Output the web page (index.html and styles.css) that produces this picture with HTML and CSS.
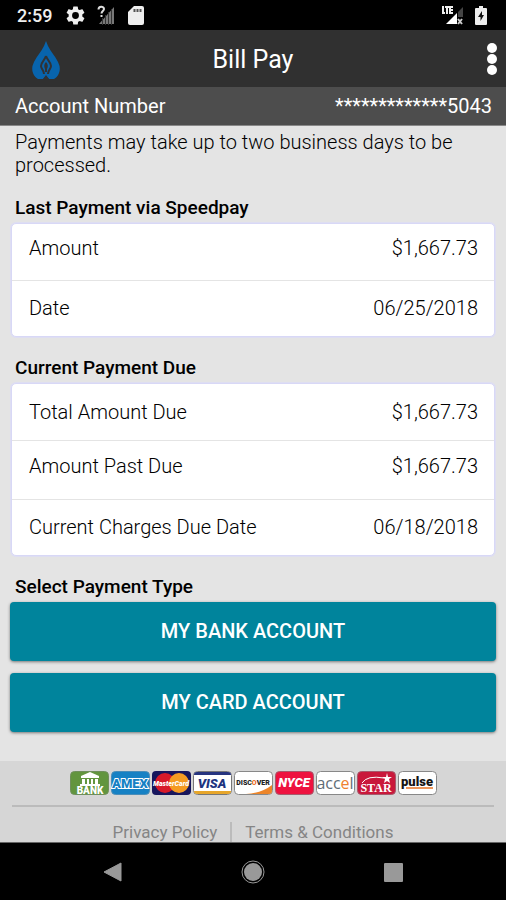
FILE: index.html
```html
<!DOCTYPE html>
<html lang="en">
<head>
<meta charset="utf-8">
<meta name="viewport" content="width=device-width, initial-scale=1">
<title>Bill Pay</title>
<link rel="stylesheet" href="styles.css">
</head>
<body>
<div class="status">
  <span class="clock">2:59</span>
  <svg class="gear" viewBox="2 2 20 20" width="19" height="19" aria-hidden="true"><path fill="#eee" d="M19.14 12.94c.04-.3.06-.61.06-.94s-.02-.64-.07-.94l2.03-1.58a.49.49 0 0 0 .12-.61l-1.92-3.32a.49.49 0 0 0-.59-.22l-2.39.96a7 7 0 0 0-1.62-.94l-.36-2.54a.48.48 0 0 0-.48-.41h-3.84a.47.47 0 0 0-.47.41l-.36 2.54c-.59.24-1.13.57-1.62.94l-2.39-.96a.48.48 0 0 0-.59.22L2.74 8.87a.48.48 0 0 0 .12.61l2.03 1.58a6 6 0 0 0-.02 1.88l-2.03 1.58a.49.49 0 0 0-.12.61l1.92 3.32c.12.22.37.29.59.22l2.39-.96c.5.38 1.03.7 1.62.94l.36 2.54c.05.24.24.41.48.41h3.84c.24 0 .44-.17.47-.41l.36-2.54a7 7 0 0 0 1.62-.94l2.39.96c.22.08.47 0 .59-.22l1.92-3.32a.47.47 0 0 0-.12-.61zM12 15.6a3.6 3.6 0 1 1 0-7.2 3.6 3.6 0 0 1 0 7.2z"/></svg>
  <svg class="unknown" viewBox="0 0 18 20" width="18" height="20" aria-hidden="true"><path fill="#777" d="M17 2v17H2z"/><path stroke="#333" d="M5.500 13v7M8.500 10v10M11.500 7v13M14.500 4v16"/><path fill="none" stroke="#000" stroke-width="5" d="M1.500 4.500C1.500 1 7 1 7 4c0 2-2.500 2-2.500 4.500"/><path fill="none" stroke="#ddd" stroke-width="2" d="M1.500 4.500C1.500 1 7 1 7 4c0 2-2.500 2-2.500 4.500M4.500 10v2"/></svg>
  <svg class="sd" viewBox="0 0 16 19" width="16" height="19" aria-hidden="true"><path fill="#eee" d="M6 0h8q2 0 2 2v15q0 2-2 2H2q-2 0-2-2V6z"/><path stroke="#555" stroke-width="2" d="M6.500 3v3M9.500 3v3M12.500 3v3"/></svg>
  <svg class="lte" viewBox="0 0 24 20" width="24" height="20" aria-hidden="true"><path fill="#444" d="M22 2v10h-5V7z"/><path fill="#fff" d="M16 8v11H5z"/><path fill="none" stroke="#eee" stroke-width="2" d="M2 1v7h2M4 2h4M6 2v7M12 2H9v6h3M9 5h3"/><path stroke="#ccc" stroke-width="2" d="M17 14l4 5M21 14l-4 5"/></svg>
  <svg class="battery" viewBox="0 0 12 19" width="12" height="19" aria-hidden="true"><path fill="#eee" d="M4 0h4v2h3q1 0 1 1v15q0 1-1 1H1q-1 0-1-1V3q0-1 1-1h3z"/><path fill="#111" d="M7 5l-4 6h2.500v4L9 9H7z"/></svg>
</div>
<header class="header">
  <svg class="logo" viewBox="0 0 28 38" width="28" height="38" aria-hidden="true"><path fill="#0864ad" d="M14 0l2 5c3 6 7 10 10 16q3 6 1 11c-1 3-3 5-5 6h-5l-3-3-3 3H6c-2-1-4-3-5-6q-2-5 1-11C5 15 9 11 12 5z"/><path fill="none" stroke="#303236" stroke-width="2" d="M14 15c-1 4-5 6-5 10 0 3 3 4 3 8M14 15c1 4 5 6 5 10 0 3-3 4-3 8"/><path fill="#303236" d="M14 21q3 3 1 7v3h-2v-3q-2-4 1-7zM14 34l3 4h-6z"/></svg>
  <h1 class="title">Bill Pay</h1>
  <button class="menu" aria-label="More options"><svg viewBox="0 0 10 34" width="10" height="34" aria-hidden="true"><g fill="#fff"><circle cx="5" cy="5" r="5"/><circle cx="5" cy="16" r="5"/><circle cx="5" cy="27" r="5"/></g></svg></button>
</header>
<div class="account"><span>Account Number</span><span>*************5043</span></div>
<main class="main">
  <p class="notice">Payments may take up to two business days to be processed.</p>
  <h2 class="heading">Last Payment via Speedpay</h2>
  <dl class="card">
    <div class="row high"><dt>Amount</dt><dd>$1,667.73</dd></div>
    <div class="row"><dt>Date</dt><dd>06/25/2018</dd></div>
  </dl>
  <h2 class="heading">Current Payment Due</h2>
  <dl class="card">
    <div class="row"><dt>Total Amount Due</dt><dd>$1,667.73</dd></div>
    <div class="row high tall"><dt>Amount Past Due</dt><dd>$1,667.73</dd></div>
    <div class="row"><dt>Current Charges Due Date</dt><dd>06/18/2018</dd></div>
  </dl>
  <h2 class="heading">Select Payment Type</h2>
  <div class="actions">
    <button class="pay">MY BANK ACCOUNT</button>
    <button class="pay">MY CARD ACCOUNT</button>
  </div>
</main>
<footer class="footer">
  <div class="brands">
    <svg viewBox="0 0 39 24" width="39" height="24"><rect x=".5" y=".5" width="38" height="23" rx="4" fill="#62953e" stroke="#6f8f5c"/><path fill="#fff" d="M20 1l9 4v2H11V5zM12 8h3v5h-3zM17 8h2v5h-2zM21 8h2v5h-2zM25 8h3v5h-3zM10 13h20v2H10z"/><text x="20" y="23" class="mark" font-size="10" fill="#fff">BANK</text></svg>
    <svg viewBox="0 0 39 24" width="39" height="24"><rect x=".5" y=".5" width="38" height="23" rx="4" fill="#1681c4" stroke="#4a8db8"/><text x="19" y="17" class="mark outlined" font-size="13" fill="#1681c4">AMEX</text></svg>
    <svg viewBox="0 0 39 24" width="39" height="24"><rect width="39" height="24" rx="4" fill="#17165d"/><circle cx="13" cy="12" r="10" fill="#d81929"/><circle cx="27" cy="12" r="10" fill="#f59b22"/><text x="19" y="15" class="mark slant" font-size="7" fill="#fff">MasterCard</text></svg>
    <svg viewBox="0 0 39 24" width="39" height="24"><rect x=".5" y=".5" width="38" height="23" rx="4" fill="#fff" stroke="#777"/><path fill="#26347f" d="M1 4q0-3 3-3h31q3 0 3 3z"/><path fill="#e6a52a" d="M1 20h37q0 3-3 3H4q-3 0-3-3z"/><text x="19" y="17" class="mark slant" font-size="13" fill="#20347f">VISA</text></svg>
    <svg viewBox="0 0 39 24" width="39" height="24"><rect x=".5" y=".5" width="38" height="23" rx="4" fill="#fff" stroke="#888"/><path fill="#ed8529" d="M12 23q16-1 26-9v6q0 3-3 3z"/><text x="19" y="14" class="mark" font-size="7" fill="#222">DISC<tspan fill="#ed6b20">O</tspan>VER</text></svg>
    <svg viewBox="0 0 39 24" width="39" height="24"><rect x=".5" y=".5" width="38" height="23" rx="4" fill="#ee123f" stroke="#a65a6c"/><text x="19" y="16" class="mark slant" font-size="13" fill="#fff">NYCE</text></svg>
    <svg viewBox="0 0 39 24" width="39" height="24"><rect x=".5" y=".5" width="38" height="23" rx="4" fill="#fff" stroke="#888"/><text x="19" y="18" class="accel" font-size="16" fill="#606d76">acc<tspan fill="#ef8130">e</tspan>l</text></svg>
    <svg viewBox="0 0 39 24" width="39" height="24"><rect x=".5" y=".5" width="38" height="23" rx="4" fill="#c9183b" stroke="#a65a6c"/><text x="19" y="21" class="star" font-size="12" fill="#fff">STAR</text><path fill="none" stroke="#fff" d="M5 12q5-8 22-5"/><path fill="#fff" d="M30 2l1 4h4l-3 2 1 4-3-2-3 2 1-4-3-2h4z"/></svg>
    <svg viewBox="0 0 39 24" width="39" height="24"><rect x=".5" y=".5" width="38" height="23" rx="4" fill="#fff" stroke="#888"/><path stroke="#ed965b" stroke-width="2" d="M8 17h27"/><text x="19" y="15" class="mark" font-size="13" fill="#151515">pulse</text></svg>
  </div>
  <nav class="links"><a href="#privacy">Privacy Policy</a><span class="bar"></span><a href="#terms">Terms &amp; Conditions</a></nav>
</footer>
<div class="navbar">
  <button aria-label="Back"><svg viewBox="0 0 24 24" width="24" height="24"><path fill="#999" d="M20 3v18L3 12z" stroke="#999" stroke-linejoin="round"/></svg></button>
  <button aria-label="Home"><svg viewBox="0 0 24 24" width="24" height="24"><circle cx="12" cy="12" r="11" fill="none" stroke="#999"/><circle cx="12" cy="12" r="9" fill="#999"/></svg></button>
  <button aria-label="Recent apps"><svg viewBox="0 0 24 24" width="24" height="24"><rect x="3" y="3" width="19" height="19" rx="1" fill="#999"/></svg></button>
</div>
</body>
</html>
```
FILE: styles.css
```css
* { box-sizing: border-box; }
body {
  margin: 0;
  min-height: 100vh;
  display: flex;
  flex-direction: column;
  background: #e4e4e4;
  color: #000;
  font: 20px/23px Roboto, sans-serif;
}
h1, h2, p, dl, dd { margin: 0; }
button { border: 0; padding: 0; background: none; font: inherit; color: inherit; }
svg { display: block; }
.status {
  display: flex;
  align-items: center;
  height: 30px;
  padding: 0 19px 0 17px;
  background: #000;
}
.clock { color: #eee; font-size: 18px; font-weight: 500; }
.gear { margin-left: 14px; }
.unknown { margin-left: 12px; }
.sd { margin-left: 13px; }
.lte { margin-left: auto; }
.battery { margin-left: 10px; }
.header {
  display: grid;
  grid-template-columns: 60px 1fr 60px;
  align-items: center;
  height: 57px;
  padding-top: 2px;
  background: #303030;
  color: #fff;
}
.logo { justify-self: end; }
.title { text-align: center; font-size: 25px; line-height: 30px; font-weight: 400; }
.menu { justify-self: end; margin-right: 9px; }
.account {
  display: flex;
  justify-content: space-between;
  align-items: center;
  height: 39px;
  padding: 0 14px 0 15px;
  background: #4d4d4d;
  border-bottom: 1px solid #888;
  color: #fff;
}
.main { flex: 1; padding: 5px 10px 0; }
.notice { padding: 0 5px; font-weight: 300; }
.heading {
  padding: 19px 5px 4px;
  font-size: 19px;
  line-height: 23px;
  font-weight: 500;
}
.card {
  margin: 0 1px;
  background: #fff;
  border: 1px solid #d8d8f6;
  border-radius: 5px;
  box-shadow: 0 0 0 1px #dedef2;
  font-weight: 300;
}
.row {
  display: flex;
  justify-content: space-between;
  align-items: center;
  height: 56px;
  padding: 0 16px 0 17px;
}
.row + .row { border-top: 1px solid #e4e4e4; }
.row.high { padding-bottom: 8px; }
.row.tall { height: 59px; }
.actions { display: grid; gap: 12px; }
.pay {
  height: 59px;
  border-radius: 4px;
  background: #00849c;
  color: #fff;
  font-weight: 500;
  box-shadow: 0 1px 3px #777;
}
.footer { padding: 10px 12px 0; background: #d6d6d6; }
.brands { display: flex; justify-content: center; gap: 2px; padding-bottom: 10px; }
.mark { font-family: Roboto, sans-serif; font-weight: 900; text-anchor: middle; }
.outlined { stroke: #fff; stroke-width: 2px; paint-order: stroke; }
.slant { font-style: italic; }
.accel { font-family: "Open Sans", sans-serif; text-anchor: middle; }
.star { font-family: "Liberation Serif", serif; font-weight: 700; text-anchor: middle; }
.links {
  display: flex;
  justify-content: center;
  gap: 13px;
  height: 37px;
  padding-top: 15px;
  border-top: 2px solid #bbb;
  font-size: 17px;
  line-height: 20px;
}
.links a { color: #858585; text-decoration: none; }
.bar { width: 2px; background: #bbb; }
.navbar {
  display: grid;
  grid-template-columns: repeat(3, 1fr);
  height: 58px;
  padding: 0 43px;
  background: #000;
  border-top: 1px solid #666;
}
.navbar button { display: grid; place-items: center; }
```
